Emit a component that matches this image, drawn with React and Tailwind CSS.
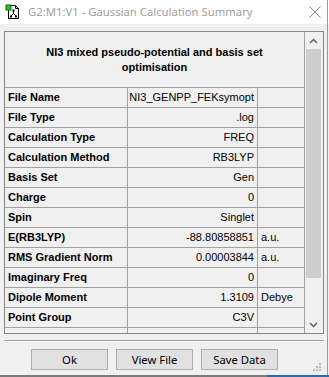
const rows = [
  { label: 'File Name', value: 'NI3_GENPP_FEKsymopt', unit: '' },
  { label: 'File Type', value: '.log', unit: '' },
  { label: 'Calculation Type', value: 'FREQ', unit: '' },
  { label: 'Calculation Method', value: 'RB3LYP', unit: '' },
  { label: 'Basis Set', value: 'Gen', unit: '' },
  { label: 'Charge', value: '0', unit: '' },
  { label: 'Spin', value: 'Singlet', unit: '' },
  { label: 'E(RB3LYP)', value: '-88.80858851', unit: 'a.u.' },
  { label: 'RMS Gradient Norm', value: '0.00003844', unit: 'a.u.' },
  { label: 'Imaginary Freq', value: '0', unit: '' },
  { label: 'Dipole Moment', value: '1.3109', unit: 'Debye' },
  { label: 'Point Group', value: 'C3V', unit: '' },
];

function AppIcon() {
  return (
    <svg width="16" height="16" viewBox="0 0 16 16" className="shrink-0">
      <path d="M3.5 1.5h7l3 3v10h-10z" fill="#fff" stroke="#000" />
      <path d="M10.5 1.5v3h3" fill="none" stroke="#000" />
      <rect x="1" y="1" width="5" height="5" fill="#22c322" stroke="#0a6e0a" />
      <g stroke="#000" strokeWidth="1" fill="none">
        <path d="M8.5 6.5v3M8.5 9.5l-2.5 2.5M8.5 9.5l2.5 2.5" />
      </g>
      <rect x="7.5" y="5.5" width="2" height="2" fill="#000" />
      <rect x="5" y="11.5" width="2" height="2" fill="#000" />
      <rect x="10" y="11.5" width="2" height="2" fill="#000" />
    </svg>
  );
}

function Row({ label, value, unit }) {
  return (
    <div className="flex h-[20px] border-t border-[#a0a0a0]">
      <div className="w-[123px] border-r border-[#a0a0a0] pl-[3px] flex items-center font-bold whitespace-nowrap overflow-hidden">
        {label}
      </div>
      <div className="w-[130px] border-r border-[#a0a0a0] pr-[3px] flex items-center justify-end whitespace-nowrap overflow-hidden">
        {value}
      </div>
      <div className="w-[46px] pl-[3px] flex items-center whitespace-nowrap">{unit}</div>
    </div>
  );
}

export default function App() {
  return (
    <div className="relative w-[329px] h-[377px] overflow-hidden bg-[#f0f0f0] text-black font-['Liberation_Sans',Arial,sans-serif] text-[11px]">
      {/* Title bar */}
      <div className="h-[24px] bg-white flex items-center pl-[5px] pr-[8px]">
        <AppIcon />
        <span className="ml-[7px] text-[11.3px] text-[#a0a0a0] font-['Noto_Sans',sans-serif] whitespace-nowrap">
          G2:M1:V1 - Gaussian Calculation Summary
        </span>
        <svg width="12" height="12" viewBox="0 0 12 12" className="ml-auto">
          <path d="M0.5 0.5l11 11M11.5 0.5l-11 11" stroke="#8a8a8a" strokeWidth="1" />
        </svg>
      </div>

      {/* Summary panel */}
      <div className="ml-[4px] mt-[7px] w-[320px] h-[303px] border border-[#828790] flex">
        <div className="w-[299px] flex flex-col">
          <div className="h-[55px] flex flex-col items-center justify-center font-bold text-[11px] leading-[15px] text-center">
            <span>NI3 mixed pseudo-potential and basis set</span>
            <span>optimisation</span>
          </div>
          {rows.map((r) => (
            <Row key={r.label} {...r} />
          ))}
          <div className="flex flex-1 border-t border-[#a0a0a0]">
            <div className="w-[123px] border-r border-[#a0a0a0]" />
            <div className="w-[130px] border-r border-[#a0a0a0]" />
          </div>
        </div>
        {/* Scrollbar */}
        <div className="w-[18px] border-l border-[#a0a0a0] flex flex-col items-center">
          <div className="h-[17px] flex items-center justify-center">
            <svg width="9" height="6" viewBox="0 0 9 6">
              <path d="M1 5l3.5-3.5L8 5" stroke="#606060" strokeWidth="1.5" fill="none" />
            </svg>
          </div>
          <div className="w-[15px] h-[229px] bg-[#cdcdcd]" />
          <div className="flex-1" />
          <div className="h-[17px] flex items-center justify-center">
            <svg width="9" height="6" viewBox="0 0 9 6">
              <path d="M1 1l3.5 3.5L8 1" stroke="#606060" strokeWidth="1.5" fill="none" />
            </svg>
          </div>
        </div>
      </div>

      {/* Separator */}
      <div className="ml-[4px] mt-[6px] w-[320px] h-[2px] border-t border-[#a0a0a0] border-b border-b-white" />

      {/* Buttons */}
      <div className="mt-[7px] pl-[31px] flex gap-[8px] font-['Noto_Sans',sans-serif] text-[11.3px]">
        {['Ok', 'View File', 'Save Data'].map((b) => (
          <button
            key={b}
            className="w-[77px] h-[21px] bg-[#e1e1e1] border border-[#adadad] flex items-center justify-center leading-none"
          >
            {b}
          </button>
        ))}
      </div>

      {/* Resize grip */}
      <svg width="8" height="8" viewBox="0 0 8 8" className="absolute left-[313px] top-[363px]">
        <rect x="6" y="0" width="2" height="2" fill="#bcbcbc" />
        <rect x="3" y="3" width="2" height="2" fill="#bcbcbc" />
        <rect x="6" y="3" width="2" height="2" fill="#bcbcbc" />
        <rect x="0" y="6" width="2" height="2" fill="#bcbcbc" />
        <rect x="3" y="6" width="2" height="2" fill="#bcbcbc" />
        <rect x="6" y="6" width="2" height="2" fill="#bcbcbc" />
      </svg>

      {/* Window edges */}
      <div className="absolute right-[1px] top-0 w-[1px] h-[376px] bg-[#9a9a9a]" />
      <div className="absolute left-0 bottom-0 w-[329px] h-[2px] bg-[#7a7a7a]" />
      <div className="absolute left-[267px] bottom-0 w-[62px] h-[2px] bg-[#2b6cb0]" />
    </div>
  );
}
